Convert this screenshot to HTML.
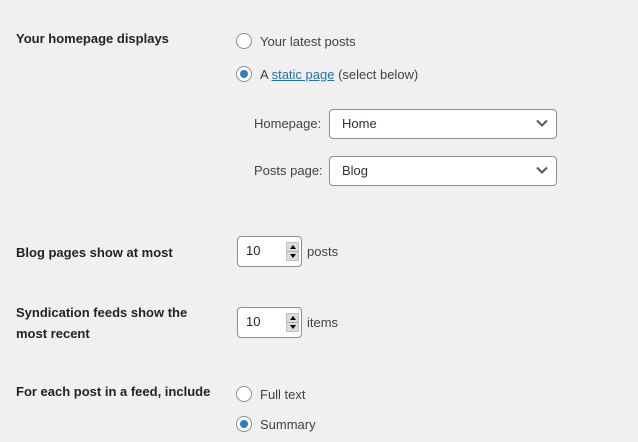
<!DOCTYPE html>
<html><head><style>
body{margin:0;width:638px;height:442px;background:#f0f0f1;font-family:"Liberation Sans",sans-serif;font-size:13px;color:#1d2327;position:relative;overflow:hidden}
.a{position:absolute;white-space:nowrap;line-height:16px}
.b{font-weight:bold;color:#1d2327}
.r{position:absolute;width:14px;height:14px;border:1px solid #8c8f94;border-radius:50%;background:#fff}
.r.on::after{content:"";position:absolute;left:3px;top:3px;width:8px;height:8px;border-radius:50%;background:#2a7fc1}
.sel{position:absolute;left:329px;width:226px;height:28px;border:1px solid #8c8f94;border-radius:4px;background:#fff}
.sel span{position:absolute;left:12px;top:6px;font-size:13px;line-height:16px;color:#2c3338}
.sel svg{position:absolute;right:8px;top:9px}
.num{position:absolute;left:237px;width:63px;height:29px;border:1px solid #8c8f94;border-radius:4px;background:#fff}
.num span{position:absolute;left:8px;top:6px;line-height:16px}
.sp{position:absolute;left:48px;top:5px;width:13px;height:19px;background:#dcdcdc;border:1px solid #bfbfbf;box-sizing:border-box}
.sp::after{content:"";position:absolute;left:0;right:0;top:8px;height:1px;background:#aaa}
.sp i{position:absolute;left:3px;width:0;height:0;border-left:3px solid transparent;border-right:3px solid transparent}
</style></head><body>
<div class="a b" style="left:16px;top:31px">Your homepage displays</div>
<div class="r" style="left:236px;top:33px"></div>
<div class="a" style="left:260px;top:34px;color:#3c434a">Your latest posts</div>
<div class="r on" style="left:236px;top:66px"></div>
<div class="a" style="left:260px;top:67px;color:#3c434a">A <span style="color:#2271b1;text-decoration:underline">static page</span> (select below)</div>
<div class="a" style="left:254px;top:116px;color:#3c434a">Homepage:</div>
<div class="sel" style="top:109px"><span>Home</span><svg width="12" height="8" viewBox="0 0 12 8"><path d="M1 1.5L6 6.5L11 1.5" stroke="#50575e" stroke-width="2" fill="none"/></svg></div>
<div class="a" style="left:254px;top:163px;color:#3c434a">Posts page:</div>
<div class="sel" style="top:156px"><span>Blog</span><svg width="12" height="8" viewBox="0 0 12 8"><path d="M1 1.5L6 6.5L11 1.5" stroke="#50575e" stroke-width="2" fill="none"/></svg></div>
<div class="a b" style="left:16px;top:245px">Blog pages show at most</div>
<div class="num" style="top:236px"><span>10</span><div class="sp"><i style="top:2px;border-bottom:4px solid #000"></i><i style="top:11px;border-top:4px solid #000"></i></div></div>
<div class="a" style="left:307px;top:244px;color:#3c434a">posts</div>
<div class="a b" style="left:16px;top:305px">Syndication feeds show the</div>
<div class="a b" style="left:16px;top:326px">most recent</div>
<div class="num" style="top:307px"><span>10</span><div class="sp"><i style="top:2px;border-bottom:4px solid #000"></i><i style="top:11px;border-top:4px solid #000"></i></div></div>
<div class="a" style="left:307px;top:315px;color:#3c434a">items</div>
<div class="a b" style="left:16px;top:384px">For each post in a feed, include</div>
<div class="r" style="left:236px;top:386px"></div>
<div class="a" style="left:260px;top:387px;color:#3c434a">Full text</div>
<div class="r on" style="left:236px;top:416px"></div>
<div class="a" style="left:260px;top:417px;color:#3c434a">Summary</div>
</body></html>
